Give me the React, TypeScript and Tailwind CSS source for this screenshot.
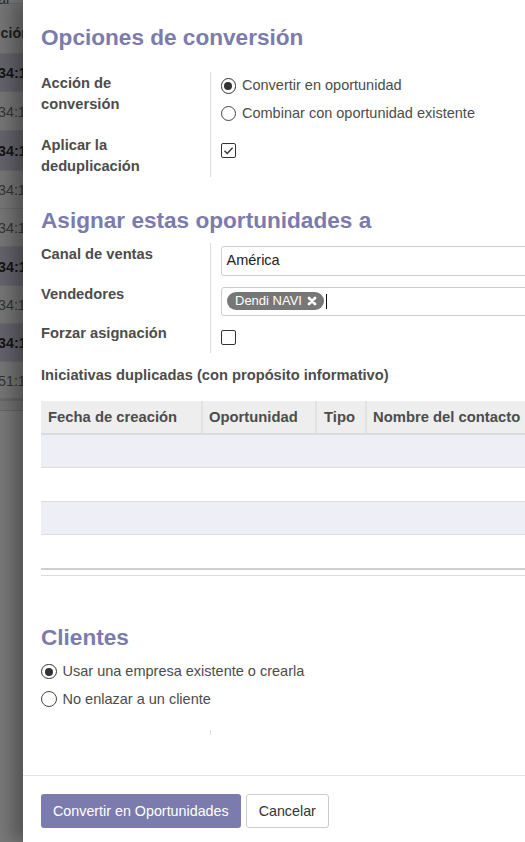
import React from "react";

const stripRows = [
  { h: "h-[38px]", bold: true, text: "34:12" },
  { h: "h-[39px]", bold: false, text: "34:12" },
  { h: "h-[40px]", bold: true, text: "34:12" },
  { h: "h-[38px]", bold: false, text: "34:12" },
  { h: "h-[38px]", bold: false, text: "34:12" },
  { h: "h-[39px]", bold: true, text: "34:12" },
  { h: "h-[38px]", bold: false, text: "34:12" },
  { h: "h-[38px]", bold: true, text: "34:12" },
  { h: "h-[37px]", bold: false, text: "51:12" },
];

const BackdropStrip = () => (
  <div className="w-[23px] shrink-0 overflow-hidden bg-[#787878] text-[14.3px] leading-[21px] whitespace-nowrap text-[#2a2a2a]">
    <div className="h-[15px] border-b border-[#686868] bg-[#767679]">
      <span className="block -mt-[11.5px] -ml-[2px]">ar</span>
    </div>
    <div className="flex h-[50px] items-end border-b border-[#686868] bg-[#747474] pb-[9px] font-bold text-[#1e1e1e]">
      <span className="ml-[0.5px]">ción</span>
    </div>
    {stripRows.map((r, i) => (
      <div
        key={i}
        className={
          r.bold
            ? `flex ${r.h} items-center border-b border-[#6a6a6a] bg-[#64636c] pt-[3px] font-bold text-[#141414]`
            : `flex ${r.h} items-center border-b border-[#6a6a6a] bg-[#757575] pt-[3px] text-[#333]`
        }
      >
        <span className="-ml-[2px]">{r.text}</span>
      </div>
    ))}
    <div className="h-[12px] border-t-2 border-b border-[#666] bg-[#727272]" />
  </div>
);

const Radio = ({ checked, label }: { checked?: boolean; label: string }) => (
  <div className="flex h-[27.5px] items-center">
    <span
      className={
        checked
          ? "flex h-[15.5px] w-[15.5px] items-center justify-center rounded-full border-[1.5px] border-[#333]"
          : "flex h-[15.5px] w-[15.5px] items-center justify-center rounded-full border border-[#444]"
      }
    >
      {checked && <span className="h-[8px] w-[8px] rounded-full bg-[#333]" />}
    </span>
    <span className="ml-[6px] text-[#4c4c4c]">{label}</span>
  </div>
);

const Checkbox = ({ checked }: { checked?: boolean }) => (
  <span className="flex h-[15px] w-[15px] items-center justify-center rounded-[2px] border border-[#333] bg-white">
    {checked && (
      <svg width="11" height="11" viewBox="0 0 11 11">
        <polyline points="1.5,5.8 4.2,8.4 9.6,2.8" fill="none" stroke="#333" strokeWidth="1.4" />
      </svg>
    )}
  </span>
);

const Label = ({ children, className = "" }: { children: React.ReactNode; className?: string }) => (
  <div className={`pr-4 text-[14.7px] font-bold text-[#4c4c4c] ${className}`}>{children}</div>
);

export default function App() {
  return (
    <div className="flex h-[842px] w-[525px] overflow-hidden bg-[#777] font-['Liberation_Sans',Arial,sans-serif] text-[14.5px] leading-[21px]">
      <BackdropStrip />
      <div className="relative z-10 flex h-[842px] w-[760px] shrink-0 flex-col bg-white shadow-[-10px_0_16px_rgba(0,0,0,0.3)]">
        <div className="flex-1 pl-[18px] pr-4">
          {/* Opciones de conversión */}
          <h2 className="mt-[25px] text-[22.6px] leading-[26px] font-bold text-[#7c7bad]">Opciones de conversión</h2>
          <div className="mt-[21px] grid grid-cols-[169px_1fr]">
            <Label className="pt-[0.5px] pb-[8px]">
              Acción de
              <br />
              conversión
            </Label>
            <div className="border-l border-[#ddd] pl-[9.5px] pb-[8px]">
              <Radio checked label="Convertir en oportunidad" />
              <Radio label="Combinar con oportunidad existente" />
            </div>
            <Label>
              Aplicar la
              <br />
              deduplicación
            </Label>
            <div className="border-l border-[#ddd] pl-[9.5px] pt-[7.5px]">
              <Checkbox checked />
            </div>
          </div>

          {/* Asignar estas oportunidades a */}
          <h2 className="mt-[31px] text-[22.6px] leading-[26px] font-bold text-[#7c7bad]">Asignar estas oportunidades a</h2>
          <div className="mt-[8.5px] grid grid-cols-[169px_1fr]">
            <Label className="pt-[1.5px]">Canal de ventas</Label>
            <div className="border-l border-[#ddd] pl-[9.5px] pt-[3px] pb-[7px]">
              <div className="flex h-[30px] items-center rounded-[3px] border border-[#ccc] px-[5px] text-[#222]">América</div>
            </div>
            <Label className="pt-[1.5px]">Vendedores</Label>
            <div className="border-l border-[#ddd] pl-[9.5px] pt-[4px] pb-[6px]">
              <div className="flex h-[29px] items-center rounded-[3px] border border-[#ccc] px-[5px]">
                <span className="flex h-[18px] items-center rounded-full bg-[#777] pl-[8.5px] pr-[7.5px] text-[13px] leading-[18px] text-white">
                  Dendi NAVI
                  <svg className="ml-[5px]" width="10" height="10" viewBox="0 0 10 10">
                    <path d="M2 2 L8 8 M8 2 L2 8" stroke="white" strokeWidth="2.8" strokeLinecap="round" />
                  </svg>
                </span>
                <span className="ml-[2px] h-[15px] w-px bg-[#111]" />
              </div>
            </div>
            <Label className="pt-[1.3px]">Forzar asignación</Label>
            <div className="border-l border-[#ddd] pl-[9.5px] pt-[8px] pb-[8px]">
              <Checkbox />
            </div>
          </div>

          {/* Duplicated leads */}
          <Label className="mt-[12.5px]">Iniciativas duplicadas (con propósito informativo)</Label>
          <div className="mt-[15px] w-[900px] text-[14.8px]">
            <div className="grid h-[34px] grid-cols-[160px_114px_50px_200px_1fr] border-b-2 border-[#dcdcdc] bg-[#eee] font-bold text-[#4c4c4c]">
              <div className="flex items-center px-[7px]">Fecha de creación</div>
              <div className="flex items-center border-l-2 border-[#e2e2e2] px-[6px]">Oportunidad</div>
              <div className="flex items-center border-l-2 border-[#e2e2e2] px-[7px]">Tipo</div>
              <div className="flex items-center border-l-2 border-[#e2e2e2] px-[6px]">Nombre del contacto</div>
              <div className="border-l-2 border-[#e2e2e2]" />
            </div>
            <div className="h-[33.3px] border-b border-[#dedede] bg-[#eeeef6]" />
            <div className="h-[33.3px] border-b border-[#dedede] bg-white" />
            <div className="h-[33.3px] border-b border-[#dedede] bg-[#eeeef6]" />
            <div className="h-[33px] bg-white" />
            <div className="h-[8.5px] border-t-2 border-b border-t-[#cfcfcf] border-b-[#dcdcdc]" />
          </div>

          {/* Clientes */}
          <h2 className="mt-[48.5px] text-[22.6px] leading-[26px] font-bold text-[#7c7bad]">Clientes</h2>
          <div className="mt-[7px]">
            <Radio checked label="Usar una empresa existente o crearla" />
            <Radio label="No enlazar a un cliente" />
          </div>
          <div className="mt-[17px] ml-[169px] h-[5px] w-px bg-[#ddd]" />
        </div>

        {/* Footer */}
        <div className="flex h-[67px] shrink-0 gap-[5px] border-t border-[#e3e3e3] pt-[18px] pl-[18px]">
          <button className="h-[34px] rounded-[3px] bg-[#7c7bad] px-[12px] text-[14.3px] text-white">Convertir en Oportunidades</button>
          <button className="h-[34px] rounded-[3px] border border-[#ccc] bg-white px-[12px] text-[14.3px] text-[#333]">Cancelar</button>
        </div>
      </div>
    </div>
  );
}
